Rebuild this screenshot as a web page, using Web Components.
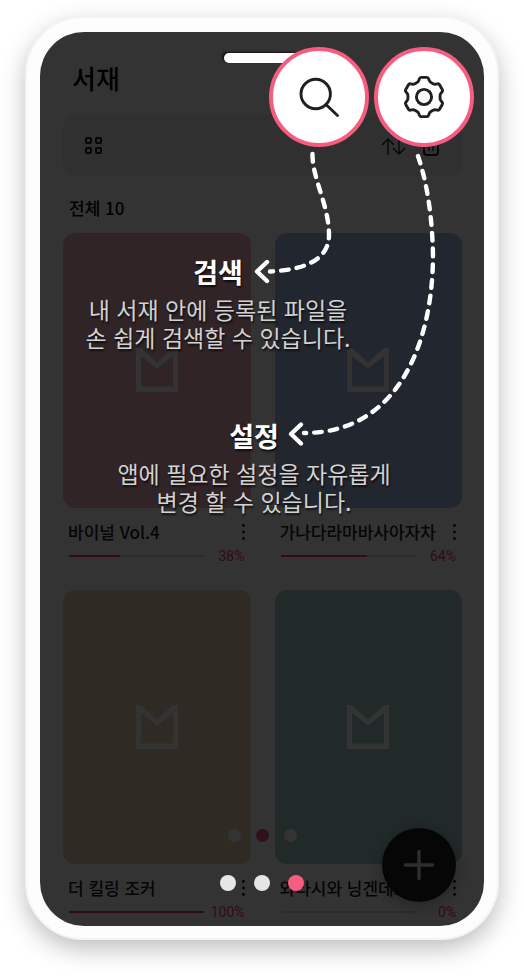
<!DOCTYPE html>
<html lang="ko">
<head>
<meta charset="utf-8">
<meta name="viewport" content="width=device-width, initial-scale=1">
<title>서재</title>
<style>
  body {
    margin: 0;
    padding: 16px 25px 36px;
    background: #fff;
    font-family: "Noto Sans CJK KR", "Noto Sans", sans-serif;
    --accent: #f65b80;
  }
</style>
</head>
<body>
<phone-frame>
  <library-screen>
    <book-card name="바이널 Vol.4" value="38" tint="#f5b4c3"></book-card>
    <book-card name="가나다라마바사아자차" value="64" tint="#aabee6"></book-card>
    <book-card name="더 킬링 조커" value="100" tint="#ebd2af"></book-card>
    <book-card name="와타시와 닝겐데스" value="0" tint="#a5d2cd"></book-card>
  </library-screen>
  <coach-overlay slot="overlay">
    <round-action slot="actions" kind="search" label="검색"></round-action>
    <round-action slot="actions" kind="settings" label="설정"></round-action>
    <coach-hint class="search" heading="검색">내 서재 안에 등록된 파일을<br>손 쉽게 검색할 수 있습니다.</coach-hint>
    <coach-hint class="settings" heading="설정">앱에 필요한 설정을 자유롭게<br>변경 할 수 있습니다.</coach-hint>
    <page-dots slot="dots" current="3"></page-dots>
  </coach-overlay>
</phone-frame>

<script>
const attach = (el, html) => {
  el.attachShadow({ mode: "open" }).innerHTML = html;
};

class PhoneFrame extends HTMLElement {
  constructor() {
    super();
    attach(this, `
      <style>
        :host {
          display: block; box-sizing: border-box; padding: 14px 13px 12px;
          border: 2px solid #f4f4f4; border-radius: 58px; background: #fdfdfd;
          box-shadow: 0 9px 24px rgba(0, 0, 0, .26);
        }
        .screen {
          position: relative; overflow: hidden; border-radius: 44px; background: #fff;
        }
      </style>
      <div class="screen"><slot></slot><slot name="overlay"></slot></div>`);
  }
}

class LibraryScreen extends HTMLElement {
  constructor() {
    super();
    attach(this, `
      <style>
        :host { display: block; padding: 26px 22px 6px 23px; color: #000; }
        h1 { margin: 0 0 17px; padding-left: 9px; font-size: 26px; line-height: 40px; font-weight: 500; }
        .bar {
          display: flex; align-items: center; justify-content: space-between;
          height: 61px; padding: 0 22px 0 20px; border-radius: 12px; background: #eee;
        }
        .tools { display: flex; gap: 16px; }
        button { display: block; padding: 0; border: 0; background: none; color: #222; }
        svg { display: block; fill: none; stroke: currentColor; }
        p { margin: 20px 0 13px; padding-left: 6px; font-size: 17px; line-height: 24px; font-weight: 500; }
        .grid { display: grid; grid-template-columns: 1fr 1fr; gap: 26px 24px; }
        page-dots { position: absolute; left: 0; right: 0; bottom: 84px; --dot: 13px; --dot-gap: 15px; --dot-off: #fff; }
        .fab {
          position: absolute; right: 28px; bottom: 24px; width: 74px; height: 74px;
          border-radius: 50%; background: #222; color: #e6e6e6;
          display: grid; place-items: center; box-shadow: 0 4px 18px rgba(0, 0, 0, .3);
        }
      </style>
      <h1>서재</h1>
      <div class="bar">
        <button aria-label="보기 방식">
          <svg width="22" height="20" viewBox="0 0 22 20" stroke-width="2">
            <rect x="3" y="2" width="5" height="5" rx="1"/><rect x="13" y="2" width="5" height="5" rx="1"/>
            <rect x="3" y="12" width="5" height="5" rx="1"/><rect x="13" y="12" width="5" height="5" rx="1"/>
          </svg>
        </button>
        <div class="tools">
          <button aria-label="정렬">
            <svg width="25" height="20" viewBox="0 0 25 20" stroke-width="1.4">
              <path d="M7 19V3M1 9l6-6 6 6M18 2v16M12 12l6 6 6-6"/>
            </svg>
          </button>
          <button aria-label="삭제">
            <svg width="18" height="20" viewBox="0 0 18 20" stroke-width="2">
              <path d="M2 4v12q0 3 3 3h8q3 0 3-3V4M0 3h18M6 3V0h6v3" />
              <path d="M7 7v8M11 7v8" stroke-width="1.4"/>
            </svg>
          </button>
        </div>
      </div>
      <p>전체 10</p>
      <div class="grid"><slot></slot></div>
      <page-dots current="2"></page-dots>
      <button class="fab" aria-label="추가">
        <svg width="32" height="32" viewBox="0 0 32 32" stroke-width="3.4" stroke-linecap="round">
          <path d="M16 2.5v27M2.5 16h27"/>
        </svg>
      </button>`);
  }
}

class BookCard extends HTMLElement {
  connectedCallback() {
    if (this.shadowRoot) return;
    const name = this.getAttribute("name");
    const value = this.getAttribute("value");
    attach(this, `
      <style>
        :host { display: block; min-width: 0; }
        .cover {
          display: grid; place-items: center; aspect-ratio: 187 / 274;
          border-radius: 12px; background: ${this.getAttribute("tint")};
        }
        .cover svg { fill: #fff; fill-rule: evenodd; }
        .row { display: flex; align-items: center; padding: 0 5px; }
        h2 {
          flex: 1; min-width: 0; margin: 12px 0 0; overflow: hidden; white-space: nowrap;
          text-overflow: ellipsis; font-size: 17px; line-height: 24px; font-weight: 500; color: #222;
        }
        button { display: block; margin-top: 12px; padding: 0; border: 0; background: none; }
        button svg { display: block; fill: #111; }
        .read { margin-top: 4px; padding: 0 6px; justify-content: space-between; }
        progress {
          appearance: none; display: block; width: 77%; max-width: 135px; height: 2px; border: 0; background: #dcdcdc;
        }
        progress::-webkit-progress-bar { background: #dcdcdc; }
        progress::-webkit-progress-value { background: #f23d66; }
        span { font: 14px/16px Roboto, sans-serif; color: #f23d66; }
      </style>
      <div class="cover">
        <svg width="42" height="44" viewBox="0 0 42 44">
          <path d="M0 0H5L21 14.5 37 0H42V44H0ZM5 8V38.500H37V8L21 20.500Z"/>
        </svg>
      </div>
      <div class="row">
        <h2>${name}</h2>
        <button aria-label="${name} 더보기">
          <svg width="5" height="16" viewBox="0 0 5 16">
            <circle cx="2.500" cy="1.500" r="1.400"/><circle cx="2.500" cy="8" r="1.400"/><circle cx="2.500" cy="14.500" r="1.400"/>
          </svg>
        </button>
      </div>
      <div class="row read">
        <progress max="100" value="${value}" aria-label="${name} 진행률"></progress>
        <span>${value}%</span>
      </div>`);
  }
}

class PageDots extends HTMLElement {
  connectedCallback() {
    if (this.shadowRoot) return;
    const current = Number(this.getAttribute("current"));
    const dots = [1, 2, 3].map(n => `<i${n === current ? ' class="on"' : ""}></i>`).join("");
    attach(this, `
      <style>
        :host { display: flex; justify-content: center; gap: var(--dot-gap, 18px); }
        i { width: var(--dot, 16px); height: var(--dot, 16px); border-radius: 50%; background: var(--dot-off, #e8e5e6); }
        .on { background: var(--accent); }
      </style>${dots}`);
  }
}

/* Six-toothed gear outline centred on 0,0 with softened corners. */
function gearPath() {
  const tooth = [[-5.6, -15.3], [-4.2, -19.6], [4.2, -19.6], [5.6, -15.3]];
  const pts = [];
  for (let k = 0; k < 6; k++) {
    const a = k * Math.PI / 3, c = Math.cos(a), s = Math.sin(a);
    for (const [x, y] of tooth) pts.push([x * c - y * s, x * s + y * c]);
  }
  const toward = (p, q, d) => {
    const len = Math.hypot(q[0] - p[0], q[1] - p[1]);
    const t = Math.min(d / len, .5);
    return [p[0] + (q[0] - p[0]) * t, p[1] + (q[1] - p[1]) * t];
  };
  const f = p => p.map(v => v.toFixed(2)).join(" ");
  return pts.map((p, i) => {
    const prev = pts[(i + pts.length - 1) % pts.length];
    const next = pts[(i + 1) % pts.length];
    return `${i ? "L" : "M"}${f(toward(p, prev, 1.6))}Q${f(p)} ${f(toward(p, next, 1.6))}`;
  }).join("") + "Z";
}

class RoundAction extends HTMLElement {
  connectedCallback() {
    if (this.shadowRoot) return;
    const icon = this.getAttribute("kind") === "search"
      ? `<circle cx="-3.300" cy="-3" r="14.700"/><path d="M7.500 8L18.500 18.500"/>`
      : `<path d="${gearPath()}"/><circle r="7.600"/>`;
    attach(this, `
      <style>
        :host { display: block; }
        button {
          display: grid; place-items: center; box-sizing: border-box; width: 100px; height: 100px;
          padding: 0; border: 4px solid var(--accent); border-radius: 50%; background: #fff;
        }
        svg { fill: none; stroke: #231f20; stroke-width: 2.9; stroke-linecap: round; stroke-linejoin: round; }
      </style>
      <button aria-label="${this.getAttribute("label")}">
        <svg width="48" height="48" viewBox="-24 -24 48 48">${icon}</svg>
      </button>`);
  }
}

class CoachHint extends HTMLElement {
  connectedCallback() {
    if (this.shadowRoot) return;
    attach(this, `
      <style>
        :host { display: block; text-align: center; text-shadow: 1px 2px 2px rgba(0, 0, 0, .7); }
        h3 { margin: 0; font-size: 27px; line-height: 46px; font-weight: 700; color: #fff; }
        p { margin: 0; font-size: 23px; line-height: 28px; color: #d2d2d2; white-space: nowrap; }
      </style>
      <h3>${this.getAttribute("heading")}</h3>
      <p><slot></slot></p>`);
  }
}

class CoachOverlay extends HTMLElement {
  constructor() {
    super();
    attach(this, `
      <style>
        :host {
          position: absolute; inset: 0; display: flex; flex-direction: column;
          box-sizing: border-box; padding: 15px 10px 35px; background: rgba(0, 0, 0, .8);
        }
        .speaker {
          position: absolute; top: 21px; left: 50%; width: 76px; height: 10px; margin-left: -38px;
          border-radius: 5px; background: #fff; box-shadow: -2px -1px 2px rgba(0, 0, 0, .6);
        }
        .actions { position: relative; display: flex; justify-content: flex-end; gap: 5px; margin-bottom: 102px; }
        .arrows {
          position: absolute; top: 0; right: 0; fill: none; stroke: #fff;
          stroke-width: 4.4; stroke-linecap: round; stroke-linejoin: round;
        }
        .dash { stroke-dasharray: 7.700 8; }
        ::slotted(coach-hint) { position: relative; }
        ::slotted(.search) { margin: 0 78px 62px -10px; }
        ::slotted(.settings) { margin: 0 6px 0 -10px; }
        .dots { margin-top: auto; }
      </style>
      <div class="speaker"></div>
      <div class="actions"><slot name="actions"></slot></div>
      <svg class="arrows" width="244" height="440" viewBox="240 32 244 440" aria-hidden="true">
        <path class="dash" d="M312.500 154C312 178 329 205 329 235C329 262 300 270 270 271.500"/>
        <path d="M267 262L257 271.500L267 281"/>
        <path class="dash" d="M418 156C424 174 432 205 433 255C433 340 400 433 304 433"/>
        <path d="M301 424.500L291 434L301 443.500"/>
      </svg>
      <slot></slot>
      <div class="dots"><slot name="dots"></slot></div>`);
  }
}

customElements.define("page-dots", PageDots);
customElements.define("book-card", BookCard);
customElements.define("library-screen", LibraryScreen);
customElements.define("round-action", RoundAction);
customElements.define("coach-hint", CoachHint);
customElements.define("coach-overlay", CoachOverlay);
customElements.define("phone-frame", PhoneFrame);
</script>
</body>
</html>
